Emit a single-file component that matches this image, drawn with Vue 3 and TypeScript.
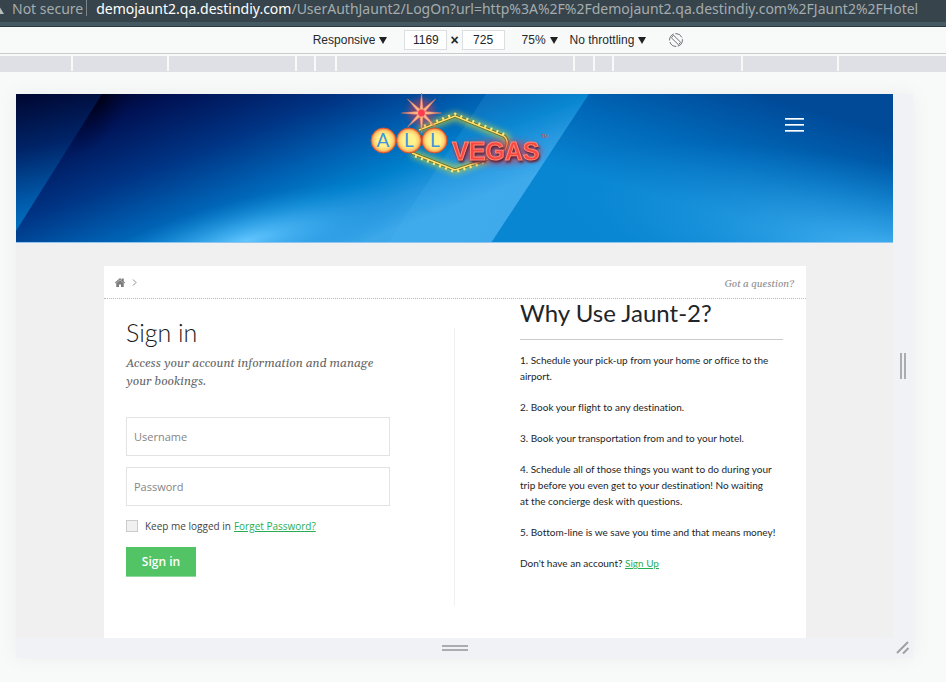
<script setup lang="ts">
import { ref } from 'vue'

const widthPx = ref('1169')
const heightPx = ref('725')
const username = ref('')
const password = ref('')
const keep = ref(false)

const segments: number[] = [71, 94, 126, 17, 19, 236, 18, 17, 127, 94, 107]

const rays: number[] = [0, 45, 90, 135, 180, 225, 270, 315]

const reasons: string[] = [
  '1. Schedule your pick-up from your home or office to the\nairport.',
  '2. Book your flight to any destination.',
  '3. Book your transportation from and to your hotel.',
  '4. Schedule all of those things you want to do during your\ntrip before you even get to your destination! No waiting\nat the concierge desk with questions.',
  '5. Bottom-line is we save you time and that means money!',
]
</script>

<template>
  <div class="browser">
    <header class="address">
      <svg class="warn" width="4" height="14" viewBox="0 0 4 14" aria-hidden="true"><path d="M-4 14 L-1 6 L4 14Z" /></svg>
      <span class="insecure">Not secure</span>
      <span class="sep"></span>
      <span class="url"><b>demojaunt2.qa.destindiy.com</b>/UserAuthJaunt2/LogOn?url=http%3A%2F%2Fdemojaunt2.qa.destindiy.com%2FJaunt2%2FHotel</span>
    </header>

    <div class="toolbar">
      <label class="pick device-pick">
        <select aria-label="Device"><option>Responsive</option></select>
        <svg width="8" height="7" viewBox="0 0 8 7" aria-hidden="true"><path d="M0 0H8L4 7Z" /></svg>
      </label>
      <div class="size">
        <input v-model="widthPx" aria-label="Width" />
        <span>×</span>
        <input v-model="heightPx" aria-label="Height" />
      </div>
      <label class="pick zoom-pick">
        <select aria-label="Zoom"><option>75%</option></select>
        <svg width="8" height="7" viewBox="0 0 8 7" aria-hidden="true"><path d="M0 0H8L4 7Z" /></svg>
      </label>
      <label class="pick">
        <select aria-label="Throttling"><option>No throttling</option></select>
        <svg width="8" height="7" viewBox="0 0 8 7" aria-hidden="true"><path d="M0 0H8L4 7Z" /></svg>
      </label>
      <button class="rotate" type="button" aria-label="Rotate">
        <svg width="16" height="16" viewBox="0 0 16 16" aria-hidden="true">
          <circle cx="8" cy="8" r="6.4" stroke-dasharray="8 1.5" />
          <path d="M5.5 3.2 L12.6 10.2 L10.5 12.8 L3.4 5.8Z" />
        </svg>
      </button>
    </div>

    <div class="ruler">
      <span v-for="(s, i) in segments" :key="i" :style="{ flexGrow: s }"></span>
    </div>

    <main class="stage">
      <div class="frame">
        <div class="page">
          <div class="banner">
            <svg class="sky" viewBox="0 0 877 148" preserveAspectRatio="none" aria-hidden="true">
              <defs>
                <linearGradient id="base" gradientUnits="userSpaceOnUse" x1="86" y1="0" x2="168" y2="215">
                  <stop offset="0" stop-color="#000630" />
                  <stop offset=".12" stop-color="#001255" />
                  <stop offset=".38" stop-color="#003484" />
                  <stop offset=".58" stop-color="#005cae" />
                  <stop offset=".76" stop-color="#0080cc" />
                  <stop offset=".88" stop-color="#2496de" />
                  <stop offset="1" stop-color="#3ca8ea" />
                </linearGradient>
                <radialGradient id="dark" gradientUnits="userSpaceOnUse" cx="0" cy="0" r="1" gradientTransform="translate(84 0) rotate(-60) scale(70 32)">
                  <stop offset="0" stop-color="#000010" />
                  <stop offset="1" stop-color="#000840" stop-opacity="0" />
                </radialGradient>
                <radialGradient id="glow" gradientUnits="userSpaceOnUse" cx="0" cy="0" r="1" gradientTransform="translate(230 146) rotate(-14) scale(170 42)">
                  <stop offset="0" stop-color="#62c6ff" />
                  <stop offset=".4" stop-color="#45b0f2" stop-opacity=".65" />
                  <stop offset="1" stop-color="#1a8cd8" stop-opacity="0" />
                </radialGradient>
                <linearGradient id="left" gradientUnits="userSpaceOnUse" x1="0" y1="0" x2="30" y2="136">
                  <stop offset="0" stop-color="#000630" />
                  <stop offset=".4" stop-color="#002468" />
                  <stop offset=".75" stop-color="#0058a8" />
                  <stop offset="1" stop-color="#0078c6" />
                </linearGradient>
                <linearGradient id="right" gradientUnits="userSpaceOnUse" x1="740" y1="0" x2="706" y2="120">
                  <stop offset="0" stop-color="#004a98" />
                  <stop offset=".5" stop-color="#0068b8" />
                  <stop offset="1" stop-color="#0886d2" />
                </linearGradient>
                <radialGradient id="corner" gradientUnits="userSpaceOnUse" cx="0" cy="0" r="1" gradientTransform="translate(877 160) rotate(12) scale(340 88)">
                  <stop offset="0" stop-color="#48b4f4" />
                  <stop offset="1" stop-color="#1a90da" stop-opacity="0" />
                </radialGradient>
                <linearGradient id="fold" gradientUnits="userSpaceOnUse" x1="420" y1="74" x2="500" y2="124">
                  <stop offset="0" stop-color="#4fb8f6" stop-opacity=".16" />
                  <stop offset="1" stop-color="#4fb8f6" stop-opacity=".1" />
                </linearGradient>
              </defs>
              <rect width="877" height="148" fill="url(#base)" />
              <rect width="877" height="148" fill="url(#dark)" />
              <rect width="877" height="148" fill="url(#glow)" />
              <path d="M470 0H573L475 148H372Z" fill="url(#fold)" />
              <path d="M0 0H86L0 136Z" fill="url(#left)" />
              <path d="M573 0H877V148H475Z" fill="url(#right)" />
              <path d="M573 0H877V148H475Z" fill="url(#corner)" />
              <rect y="147" width="877" height="1" fill="#8fc4ee" />
            </svg>
            <a class="logo" href="#" aria-label="All Vegas">
              <svg width="190" height="90" viewBox="360 90 190 90">
                <defs>
                  <filter id="blur" x="-40%" y="-60%" width="180%" height="220%"><feGaussianBlur stdDeviation="3" /></filter>
                  <radialGradient id="bulb"><stop offset=".5" stop-color="#fff28c" /><stop offset=".78" stop-color="#ffd070" /><stop offset="1" stop-color="#f2703a" /></radialGradient>
                </defs>
                <path d="M419 130 L455 116 L506 137 V148 M412 153 L455 170 L488 159" fill="none" stroke="#c4d040" stroke-width="7" opacity=".8" filter="url(#blur)" />
                <path d="M419 130 L455 116 L504 136 Q510 141 505 150 M412 153 L455 170 L488 159" fill="none" stroke="#6c6a20" stroke-width="3" />
                <path d="M419 130 L455 116 L504 136 Q510 141 505 150 M412 153 L455 170 L488 159" fill="none" stroke="#ffe372" stroke-width="1.4" />
                <path d="M424 126 L455 114 L507 135.500 M415 156 L455 172 L488 161" fill="none" stroke="#ffe878" stroke-width="2.8" stroke-dasharray="2 4.500" />
                <circle cx="421.500" cy="112" r="13" fill="#e83848" opacity=".5" filter="url(#blur)" />
                <g transform="translate(421.500 113)">
                  <path v-for="r in rays" :key="r" :transform="`rotate(${r})`" d="M-2 0 L0 -20 L2 0Z" fill="#ffb488" stroke="#d8705c" stroke-width=".5" />
                  <circle r="3.400" fill="#ff3c50" />
                </g>
                <g stroke="#d8542c" stroke-width="1">
                  <circle cx="383.500" cy="140.500" r="12.500" fill="url(#bulb)" />
                  <circle cx="409" cy="140.500" r="12.500" fill="url(#bulb)" />
                  <circle cx="434.500" cy="140.500" r="12.500" fill="url(#bulb)" />
                </g>
                <g class="all"><text x="383" y="147">A</text><text x="409" y="147">L</text><text x="435" y="147">L</text></g>
                <ellipse cx="498" cy="152" rx="44" ry="12" fill="#d8304c" opacity=".6" filter="url(#blur)" />
                <text class="vegas" x="452" y="160">VEGAS</text>
                <text class="tm" x="541" y="138">TM</text>
              </svg>
            </a>
            <button class="menu" type="button" aria-label="Menu"><i></i><i></i><i></i></button>
          </div>

          <section class="card">
            <nav class="crumbs">
              <a href="#" aria-label="Home">
                <svg width="10" height="9" viewBox="0 0 20 18" aria-hidden="true"><path d="M10 0 L14 3.500 V1 H17.500 V6.500 L20 9 L18.500 10.800 L10 3.200 L1.500 10.800 L0 9Z" /><path d="M10 4 L17.500 10.500 V18 H12 V13 H8 V18 H2.500 V10.500Z" /></svg>
              </a>
              <svg class="chev" width="5" height="7" viewBox="0 0 5 7" aria-hidden="true"><path d="M1 .5 L4 3.500 L1 6.500" /></svg>
              <a class="question" href="#">Got a question?</a>
            </nav>
            <div class="columns">
              <form class="login" @submit.prevent>
                <h1>Sign in</h1>
                <p class="lead">Access your account information and manage your bookings.</p>
                <input v-model="username" class="field" type="text" placeholder="Username" aria-label="Username" />
                <input v-model="password" class="field" type="password" placeholder="Password" aria-label="Password" />
                <div class="keep">
                  <input id="keep" v-model="keep" type="checkbox" />
                  <label for="keep">Keep me logged in</label>
                  <a href="#">Forget Password?</a>
                </div>
                <button class="submit" type="submit">Sign in</button>
              </form>
              <div class="why">
                <h2>Why Use Jaunt-2?</h2>
                <p v-for="r in reasons" :key="r">{{ r }}</p>
                <p>Don't have an account? <a href="#">Sign Up</a></p>
              </div>
            </div>
          </section>
        </div>
        <div class="grip right"><i></i><i></i></div>
        <div class="grip bottom"><i></i><i></i></div>
        <div class="grip both">
          <svg width="14" height="14" viewBox="0 0 14 14" aria-hidden="true"><path d="M1 12 L12 1 M7 12.500 L12.500 7" /></svg>
        </div>
      </div>
    </main>
  </div>
</template>

<style>
body {
  margin: 0;
  background: #f8faf9;
}
</style>

<style scoped>
* {
  box-sizing: border-box;
}
.browser {
  min-height: 100vh;
  overflow: hidden;
  display: flex;
  flex-direction: column;
  background: #f8faf9;
  font-family: "Liberation Sans", sans-serif;
  color: #212529;
}
.address {
  height: 27px;
  display: flex;
  align-items: flex-start;
  background: #37444b;
  border-bottom: 1px solid #2a3940;
  box-shadow: inset 0 -4px #455963;
  color: #a5acaf;
  font: 14px/18px "Noto Sans", sans-serif;
  white-space: nowrap;
}
.warn {
  flex: none;
  fill: #b8bec0;
}
.insecure {
  margin-left: 8px;
}
.sep {
  width: 1px;
  height: 16px;
  margin: 0 9px 0 3px;
  background: #7c878c;
}
.url b {
  font-weight: 400;
  color: #fff;
}
.toolbar {
  height: 27px;
  padding-left: 51px;
  display: flex;
  align-items: center;
  justify-content: center;
  border-bottom: 1px solid #c9cccd;
  font-size: 12px;
}
.pick {
  display: flex;
  align-items: center;
  gap: 4px;
  margin-right: 12px;
}
.pick select {
  appearance: none;
  field-sizing: content;
  padding: 0;
  border: 0;
  background: none;
  font: inherit;
  color: #26292c;
}
.pick svg {
  fill: #202124;
}
.device-pick {
  margin-right: 17px;
}
.size {
  display: flex;
  align-items: center;
  gap: 3px;
  margin-right: 17px;
}
.size input {
  width: 43px;
  height: 20px;
  padding: 0;
  border: 1px solid #dcdfe1;
  background: #fff;
  font: inherit;
  color: inherit;
  text-align: center;
}
.size span {
  font-size: 14px;
  font-weight: 700;
}
.rotate {
  display: flex;
  margin-left: 10px;
  padding: 0;
  border: 0;
  background: none;
}
.rotate svg {
  fill: none;
  stroke: #6e7276;
}
.ruler {
  height: 16px;
  margin-top: 2px;
  display: flex;
  gap: 2px;
  border-bottom: 1px solid #dee0e6;
}
.ruler span {
  flex-basis: 0;
  background: #dee0e6;
}
.stage {
  flex: 1;
  padding: 22px 33px 24px 16px;
}
.frame {
  display: grid;
  grid-template-columns: 1fr 20px;
  grid-template-rows: 1fr 20px;
  box-shadow: 0 0 20px rgba(0, 0, 0, 0.05);
}
.page {
  background: #f0f0f0;
}
.banner {
  position: relative;
  height: 149px;
}
.sky {
  display: block;
  width: 100%;
  height: 100%;
}
.logo {
  position: absolute;
  left: 344px;
  top: -4px;
}
.all text {
  font: 400 19px Lato, sans-serif;
  fill: #3d95dc;
  text-anchor: middle;
}
.vegas {
  font: 700 25px "Liberation Sans", sans-serif;
  fill: #fb4540;
  stroke: #ff8a74;
  stroke-width: 1;
  filter: drop-shadow(1px 2px 1px #5c2238);
}
.tm {
  font: 5px "Liberation Sans", sans-serif;
  fill: #e84848;
}
.menu {
  position: absolute;
  right: 89px;
  top: 24px;
  display: grid;
  gap: 4px;
  padding: 0;
  border: 0;
  background: none;
}
.menu i {
  width: 19px;
  height: 2px;
  background: #fff;
  border-bottom: 1px solid #a9c9e6;
}
.card {
  margin: 23px 87px 0 88px;
  background: #fff;
}
.crumbs {
  height: 33px;
  padding: 0 12px 0 11px;
  display: flex;
  align-items: center;
  gap: 7px;
  border-bottom: 1px dotted #b8b8b8;
}
.crumbs a {
  display: flex;
  fill: #7c7c7c;
}
.chev {
  fill: none;
  stroke: #8a8a8a;
}
.crumbs .question {
  margin-left: auto;
  padding-top: 4px;
  font: italic 10px/16px Gelasio, Georgia, "Liberation Serif", serif;
  color: #8d8d8d;
  text-decoration: none;
}
.columns {
  display: grid;
  grid-template-columns: 1fr 1fr;
}
.login {
  margin: 29px 0 32px;
  padding: 0 64px 29px 22px;
  border-right: 1px solid #f0f0f0;
  font: 11px/16px "Open Sans", sans-serif;
}
h1 {
  margin: -12px 0 7px;
  font: 300 25px/32px Lato, sans-serif;
  color: #1a1a1a;
}
.lead {
  margin: 0 0 26px;
  font: italic 12px/18px Gelasio, Georgia, "Liberation Serif", serif;
  color: #666;
}
.field {
  display: block;
  width: 100%;
  height: 39px;
  margin-bottom: 11px;
  padding: 0 7px;
  border: 1px solid #e3e3e3;
  background: #fff;
  font: inherit;
}
.field::placeholder {
  color: #858585;
}
.keep {
  display: flex;
  align-items: center;
  padding-top: 1px;
  font-size: 10px;
  color: #444;
  white-space: nowrap;
}
.keep input {
  appearance: none;
  width: 12px;
  height: 12px;
  margin: 0 7px 0 0;
  border: 1px solid #ccc;
  background: #f0f0f0;
}
.keep a {
  margin-left: 3px;
}
.keep a,
.why a {
  color: #27ae55;
}
.submit {
  width: 70px;
  height: 30px;
  margin-top: 13px;
  padding: 0;
  border: 0;
  border-bottom: 1px solid #8fd8a0;
  background: #52c466;
  font: 600 12px "Open Sans", sans-serif;
  color: #fff;
}
.why {
  padding: 0 23px 0 65px;
  font: 10px/16px Lato, sans-serif;
  font-variant-ligatures: no-common-ligatures;
}
h2 {
  margin: 0 0 12px;
  padding-bottom: 12px;
  border-bottom: 1px solid #ccc;
  font: 400 24px/28px Lato, sans-serif;
}
.why p {
  margin: 0 0 15px;
  white-space: pre-line;
}
.grip {
  display: flex;
  align-items: center;
  justify-content: center;
  gap: 2px;
  background: #f1f2f5;
}
.right i {
  width: 2px;
  height: 26px;
  background: #aaacaf;
}
.bottom {
  flex-direction: column;
}
.bottom i {
  width: 26px;
  height: 2px;
  background: #aaacaf;
}
.both svg {
  fill: none;
  stroke: #a0a0a2;
  stroke-width: 2;
}
</style>
